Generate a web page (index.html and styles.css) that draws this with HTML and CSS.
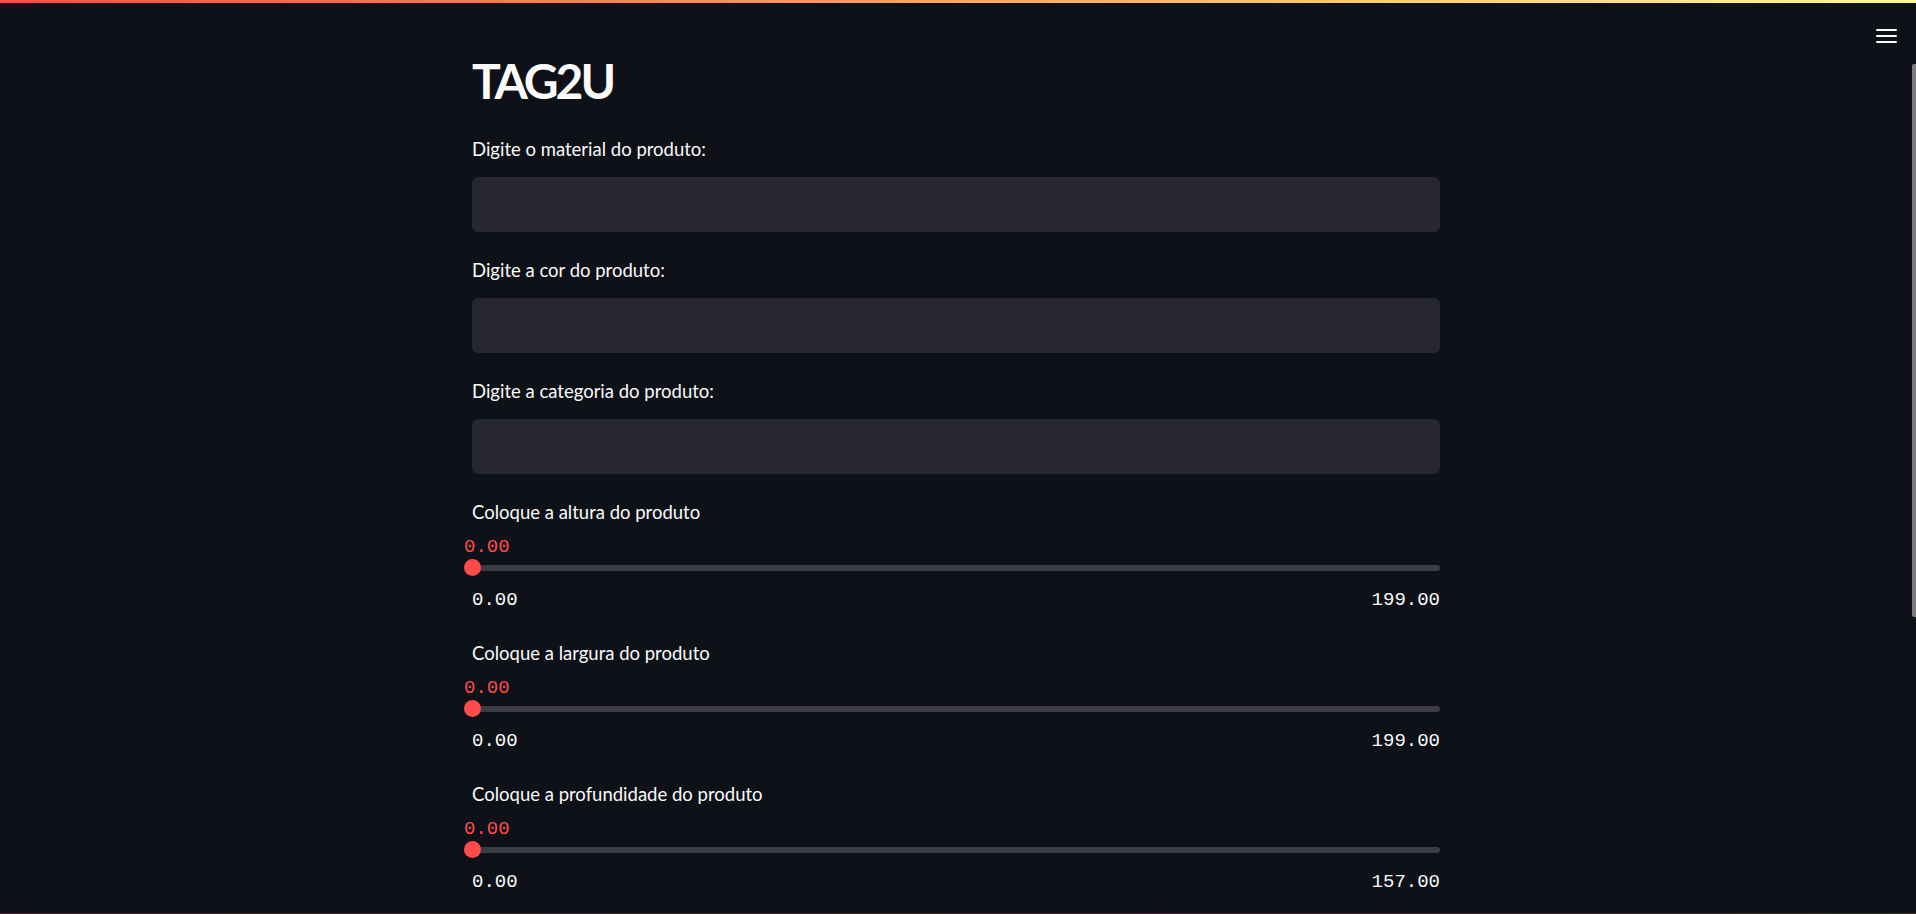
FILE: index.html
```html
<!DOCTYPE html>
<html lang="pt">
<head>
<meta charset="utf-8">
<title>TAG2U</title>
<link rel="stylesheet" href="styles.css">
</head>
<body>
<div class="decoration"></div>
<button class="menu-btn" aria-label="Menu">
  <span></span><span></span><span></span>
</button>
<main class="app">
  <div class="block">
    <h1 class="title">TAG2U</h1>

    <div class="field">
      <label class="label">Digite o material do produto:</label>
      <div class="input"></div>
    </div>
    <div class="field">
      <label class="label">Digite a cor do produto:</label>
      <div class="input"></div>
    </div>
    <div class="field">
      <label class="label">Digite a categoria do produto:</label>
      <div class="input"></div>
    </div>

    <div class="slider">
      <label class="label">Coloque a altura do produto</label>
      <div class="value">0.00</div>
      <div class="track-row"><div class="track"><div class="thumb"></div></div></div>
      <div class="ticks"><span>0.00</span><span>199.00</span></div>
    </div>
    <div class="slider">
      <label class="label">Coloque a largura do produto</label>
      <div class="value">0.00</div>
      <div class="track-row"><div class="track"><div class="thumb"></div></div></div>
      <div class="ticks"><span>0.00</span><span>199.00</span></div>
    </div>
    <div class="slider">
      <label class="label">Coloque a profundidade do produto</label>
      <div class="value">0.00</div>
      <div class="track-row"><div class="track"><div class="thumb"></div></div></div>
      <div class="ticks"><span>0.00</span><span>157.00</span></div>
    </div>
  </div>
</main>
<div class="scrollbar"></div>
<div class="bottom-line"></div>
</body>
</html>
```
FILE: styles.css
```css
html, body {
  margin: 0;
  padding: 0;
  height: 914px;
  overflow: hidden;
  background: #0e1117;
  color: #fafafa;
  font-family: "Source Sans Pro", "Lato", "Noto Sans", sans-serif;
}

.decoration {
  height: 3px;
  background: linear-gradient(90deg, #ff4b4b, #fffd80);
}

.menu-btn {
  position: absolute;
  top: 29px;
  right: 19px;
  width: 21px;
  height: 14px;
  padding: 0;
  border: 0;
  background: transparent;
  display: flex;
  flex-direction: column;
  justify-content: space-between;
}
.menu-btn span {
  display: block;
  height: 2px;
  background: #fafafa;
  border-radius: 1px;
}

.app {
  width: 1912px;
  display: flex;
  justify-content: center;
}

.block {
  width: 968px;
  display: flex;
  flex-direction: column;
  padding-top: 49px;
}

.title {
  margin: 0 0 26px;
  font-size: 48px;
  line-height: 58px;
  height: 58px;
  font-weight: 700;
  letter-spacing: -3px;
}

.field {
  display: flex;
  flex-direction: column;
  margin-bottom: 25px;
}

.label {
  display: block;
  font-size: 18.5px;
  line-height: 27px;
  height: 27px;
}

.field .label {
  margin-bottom: 14px;
}

.input {
  height: 55px;
  background: #262730;
  border-radius: 6px;
}

.slider {
  display: flex;
  flex-direction: column;
  margin-bottom: 30px;
}

.slider .label {
  margin-bottom: 11px;
}

.value,
.ticks {
  font-family: "Liberation Mono", "DejaVu Sans Mono", monospace;
  font-size: 19px;
  line-height: 20px;
  height: 20px;
}

.value {
  color: #ff4b4b;
  margin-left: -8px;
}

.track-row {
  height: 17px;
  margin-top: 2px;
  display: flex;
  align-items: center;
}

.track {
  position: relative;
  flex: 1;
  height: 6px;
  background: #3b3c44;
  border-radius: 3px;
}

.thumb {
  position: absolute;
  left: -8.5px;
  top: -5.5px;
  width: 17px;
  height: 17px;
  border-radius: 50%;
  background: #ff4b4b;
}

.ticks {
  margin-top: 14px;
  display: flex;
  justify-content: space-between;
  color: #fafafa;
}

.scrollbar {
  position: absolute;
  top: 64px;
  right: 0;
  width: 4px;
  height: 553px;
  background: #7b7b7b;
  border-radius: 2px 0 0 2px;
}

.bottom-line {
  position: absolute;
  left: 0;
  right: 0;
  bottom: 0;
  height: 1px;
  background: linear-gradient(90deg, #4b2030, #3f2a22 30%, #4a2030 60%, #3d2a2a);
}
```
